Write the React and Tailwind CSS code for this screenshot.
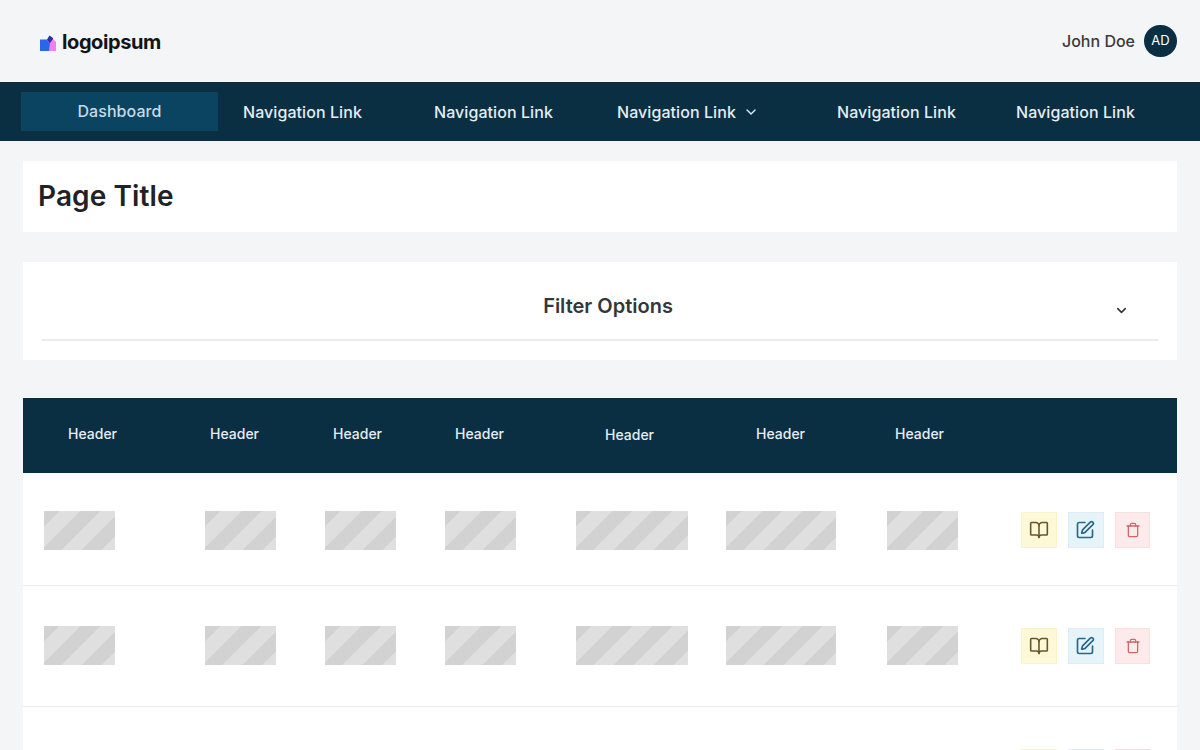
import React from "react";
import { BookOpen, SquarePen, Trash, ChevronDown } from "lucide-react";

function Ph({ w }) {
  return <div className={`h-[39px] [background-image:repeating-linear-gradient(135deg,#d2d2d2_0,#d2d2d2_11.3px,#dfdfdf_11.3px,#dfdfdf_25.5px,#d2d2d2_25.5px,#d2d2d2_28.3px)] ${w}`} />;
}

function Row({ className, cell }) {
  const c = `pl-[21px] ${cell}`;
  return (
    <div className={`grid grid-cols-[161px_120px_120px_131px_150px_161px_134px_1fr] items-center border-b border-[#e9ecef] ${className}`}>
      <div className={c}><Ph w="w-[71px]" /></div>
      <div className={c}><Ph w="w-[71px]" /></div>
      <div className={c}><Ph w="w-[71px]" /></div>
      <div className={c}><Ph w="w-[71px]" /></div>
      <div className={c}><Ph w="w-[112px]" /></div>
      <div className={c}><Ph w="w-[110px]" /></div>
      <div className={c}><Ph w="w-[71px]" /></div>
      <div className="flex gap-[11px] pl-[21px]">
        <button className="flex h-[36px] w-[36px] items-center justify-center border border-[#faf3cf] bg-[#fdf8d8] text-[#6b5526]"><BookOpen size={20} strokeWidth={1.9} /></button>
        <button className="flex h-[36px] w-[36px] items-center justify-center border border-[#dcedf5] bg-[#e6f4fa] text-[#27688c]"><SquarePen size={20} strokeWidth={2} className="-translate-x-[1px]" /></button>
        <button className="flex h-[36px] w-[35px] items-center justify-center border border-[#f8e0e2] bg-[#fdeaea] text-[#d0646c]"><Trash size={16} strokeWidth={1.9} /></button>
      </div>
    </div>
  );
}

export default function App() {
  return (
    <div className="h-[750px] overflow-hidden bg-[#f3f5f7] font-['Inter','Liberation_Sans',sans-serif]">
      <header className="flex h-[82px] items-center justify-between pl-[40px] pr-[23px]">
        <div className="flex items-center gap-[6px] pt-[2px]">
          <svg width="16" height="16" viewBox="0 0 16 16" className="mt-[2px]">
            <path d="M0 4.5 L7 4.5 L10 9 L9.5 16 L0 16 Z" fill="#2a66ea" />
            <path d="M7 4.5 L9.5 0.5 L13 3 L13 6 L10 9 Z" fill="#2a30a8" />
            <path d="M10 8 L13 4 L16 7 L16 16 L9.5 16 Z" fill="#f080ee" />
          </svg>
          <span className="text-[20px] font-bold leading-[24px] tracking-[-0.4px] text-[#111418]">logoipsum</span>
        </div>
        <div className="flex items-center gap-[9px]">
          <span className="text-[16px] font-medium text-[#3a3a3a]">John Doe</span>
          <div className="flex h-[32px] w-[33px] items-center justify-center rounded-full bg-[#0a2f43] text-[13px] font-normal text-white">AD</div>
        </div>
      </header>

      <nav className="flex h-[59px] items-center whitespace-nowrap bg-[#0a2f43] pl-[21px] text-[16px] font-medium tracking-[0.07px] text-[#e3edf2]">
        <div className="flex h-[39px] w-[197px] items-center justify-center bg-[#0b4460] pb-[2px] text-[#c5dce8]">Dashboard</div>
        <div className="ml-[25px] w-[119px]">Navigation Link</div>
        <div className="ml-[72px] w-[119px]">Navigation Link</div>
        <div className="ml-[64px] flex w-[142px] items-center gap-[7px]">Navigation Link <ChevronDown size={20} strokeWidth={2} /></div>
        <div className="ml-[78px] w-[119px]">Navigation Link</div>
        <div className="ml-[60px] w-[119px]">Navigation Link</div>
      </nav>

      <main className="px-[23px] pt-[20px]">
        <div className="flex h-[71px] items-center bg-white pb-[2px] pl-[15px]">
          <h1 className="text-[28px] font-semibold tracking-[0.1px] text-[#1f2226]">Page Title</h1>
        </div>

        <section className="mt-[30px] h-[98px] bg-white px-[18px]">
          <div className="relative flex h-[79px] items-center justify-center border-b-2 border-[#ebedef] pl-[16px] pt-[10px]">
            <span className="text-[20px] font-semibold text-[#33373b]">Filter Options</span>
            <ChevronDown className="absolute right-[30px] top-[41px] text-[#2c2f33]" size={15} strokeWidth={2.4} />
          </div>
        </section>

        <section className="mt-[38px] bg-white">
          <div className="grid h-[75px] grid-cols-[161px_120px_120px_131px_150px_161px_134px_1fr] items-center bg-[#0a2f43] pb-[4px] text-[14px] font-medium text-[#e6edf1]">
            <div className="pl-[45px]">Header</div>
            <div className="pl-[26px]">Header</div>
            <div className="pl-[29px]">Header</div>
            <div className="pl-[31px]">Header</div>
            <div className="pl-[50px] pt-[2px]">Header</div>
            <div className="pl-[51px]">Header</div>
            <div className="pl-[29px]">Header</div>
            <div />
          </div>
          <Row className="h-[113px] pt-[2px]" cell="" />
          <Row className="h-[121px]" cell="pb-[2px]" />
          <Row className="h-[121px]" cell="pt-[6px]" />
        </section>
      </main>
    </div>
  );
}
